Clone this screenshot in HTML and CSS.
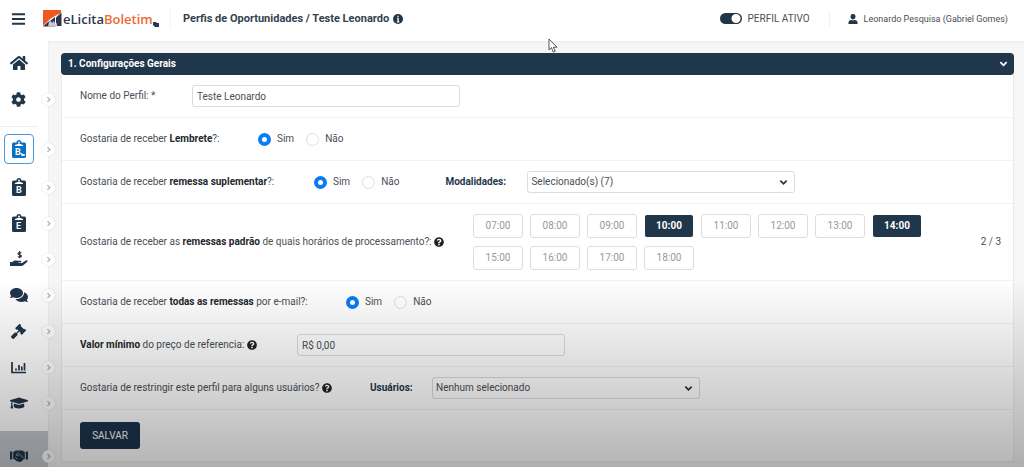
FILE: index.html
```html
<!DOCTYPE html>
<html lang="pt-BR">
<head>
<meta charset="utf-8">
<meta name="viewport" content="width=device-width, initial-scale=1">
<title>eLicita Boletim</title>
<link rel="stylesheet" href="styles.css">
</head>
<body>
<svg class="defs" aria-hidden="true">
  <symbol id="help" viewBox="0 0 512 512"><path d="M504 256c0 136.997-111.043 248-248 248S8 392.997 8 256C8 119.083 119.043 8 256 8s248 111.083 248 248zM262.655 90c-54.497 0-89.255 22.957-116.549 63.758-3.536 5.286-2.353 12.415 2.715 16.258l34.699 26.31c5.205 3.947 12.621 3.008 16.665-2.122 17.864-22.658 30.113-35.797 57.303-35.797 20.429 0 45.698 13.148 45.698 32.958 0 14.976-12.363 22.667-32.534 33.976C247.128 238.528 216 254.941 216 296v4c0 6.627 5.373 12 12 12h56c6.627 0 12-5.373 12-12v-1.333c0-28.462 83.186-29.647 83.186-106.667 0-58.002-60.165-102-116.531-102zM256 338c-25.365 0-46 20.635-46 46 0 25.364 20.635 46 46 46s46-20.636 46-46c0-25.365-20.635-46-46-46z"/></symbol>
  <symbol id="chev" viewBox="0 0 10 10"><path d="M3.5 1.5 7 5 3.5 8.500" fill="none" stroke="currentColor" stroke-width="1.600"/></symbol>
  <symbol id="down" viewBox="0 0 10 10"><path d="M1.500 3 5 6.500 8.500 3" fill="none" stroke="currentColor" stroke-width="2"/></symbol>
  <symbol id="board" viewBox="0 0 14 18"><path d="M1.500 2.500h3a2.500 2.500 0 0 1 5 0h3A1.500 1.500 0 0 1 14 4v12.500a1.500 1.500 0 0 1-1.500 1.500h-11A1.500 1.500 0 0 1 0 16.500V4a1.500 1.500 0 0 1 1.500-1.500z"/><circle cx="7" cy="2.500" r=".9" fill="#fff"/><path d="M3 6V5l4-1.500L11 5v1z" fill="#fff"/></symbol>
</svg>

<header class="topbar">
  <button class="menu" aria-label="Menu"><svg viewBox="0 0 13 12"><path d="M0 1.200h13M0 6h13M0 10.800h13" stroke="currentColor" stroke-width="2"/></svg></button>
  <a class="logo" href="#">
    <svg viewBox="0 0 19 17" aria-hidden="true"><path d="M0 0h18v3L12 6 7 9l-3 3-4 4z" fill="#f0581f"/><path d="M18.500 2.500V16H13V7.500z" fill="#2b3550"/><path d="M0 16.500 5 12l2-1 5-4v9.500z" fill="#2b3550"/><path d="m6 12 2-1 1 2 2-2 1 3 2-1v3.500H5z" fill="#c9ccd6"/></svg>
    <span class="word">eLicita<b>Boletim</b></span>
    <svg class="mark" viewBox="0 0 6 5" aria-hidden="true"><path d="M0 0h3l1 1 2 0v4H2L0 3z"/></svg>
  </a>
  <h1>Perfis de Oportunidades / Teste Leonardo
    <svg viewBox="0 0 10 10" aria-hidden="true"><circle cx="5" cy="5" r="5"/><path d="M5 1.800v1.700M4 4.800h1.200v3M3.800 7.900h2.500" stroke="#fff" stroke-width="1.200" fill="none"/></svg>
  </h1>
  <label class="active"><input type="checkbox" role="switch" checked>PERFIL ATIVO</label>
  <a class="user" href="#"><svg viewBox="0 0 10 10" aria-hidden="true"><path d="M5 0a2.500 2.500 0 0 1 2.500 2.700C7.500 4.300 6.300 5.500 5 5.500S2.500 4.300 2.500 2.700A2.500 2.500 0 0 1 5 0zM.5 10V8.500C.5 6.800 2 6 3.500 6c1 .5 2 .5 3 0C8 6 9.500 6.800 9.500 8.500V10z"/></svg>Leonardo Pesquisa (Gabriel Gomes)</a>
</header>

<div class="shell">
  <nav class="side" aria-label="Principal">
    <a class="item" href="#" aria-label="Início"><svg class="wide" viewBox="0 0 576 512"><path d="M280.370 148.260L96 300.110V464a16 16 0 0 0 16 16l112.060-.29a16 16 0 0 0 15.920-16V368a16 16 0 0 1 16-16h64a16 16 0 0 1 16 16v95.640a16 16 0 0 0 16 16.050L464 480a16 16 0 0 0 16-16V300L295.670 148.260a12.190 12.190 0 0 0-15.300 0zM571.600 251.470L488 182.560V44.050a12 12 0 0 0-12-12h-56a12 12 0 0 0-12 12v72.610L318.470 43a48 48 0 0 0-61 0L4.340 251.470a12 12 0 0 0-1.600 16.900l25.500 31A12 12 0 0 0 45.150 301l235.220-193.740a12.190 12.190 0 0 1 15.300 0L530.900 301a12 12 0 0 0 16.900-1.600l25.500-31a12 12 0 0 0-1.700-16.930z"/></svg></a>
    <a class="item" href="#" aria-label="Configurações"><svg viewBox="0 0 512 512"><path d="M487.400 315.700l-42.600-24.600c4.300-23.200 4.300-47 0-70.200l42.600-24.600c4.900-2.800 7.100-8.600 5.500-14-11.100-35.600-30-67.800-54.700-94.600-3.800-4.100-10-5.100-14.800-2.300L380.800 110c-17.900-15.400-38.500-27.300-60.800-35.100V25.800c0-5.600-3.900-10.500-9.400-11.700-36.700-8.200-74.300-7.800-109.200 0-5.500 1.200-9.400 6.100-9.400 11.700V75c-22.200 7.900-42.800 19.800-60.800 35.100L88.700 85.500c-4.900-2.800-11-1.900-14.800 2.300-24.700 26.700-43.600 58.900-54.700 94.600-1.700 5.400.6 11.200 5.500 14L67.300 221c-4.300 23.200-4.300 47 0 70.200l-42.600 24.600c-4.900 2.800-7.100 8.600-5.500 14 11.100 35.600 30 67.800 54.700 94.600 3.800 4.100 10 5.100 14.800 2.300l42.600-24.600c17.900 15.400 38.500 27.300 60.800 35.100v49.200c0 5.600 3.900 10.500 9.400 11.700 36.700 8.200 74.300 7.800 109.200 0 5.500-1.200 9.400-6.100 9.400-11.700v-49.200c22.200-7.900 42.800-19.800 60.800-35.100l42.600 24.600c4.900 2.800 11 1.900 14.800-2.300 24.700-26.700 43.600-58.900 54.700-94.600 1.500-5.500-.7-11.300-5.600-14.100zM256 336c-44.100 0-80-35.900-80-80s35.900-80 80-80 80 35.900 80 80-35.900 80-80 80z"/></svg><i class="knob"><svg><use href="#chev"/></svg></i></a>
    <hr>
    <a class="item current" href="#" aria-label="Boletins"><svg class="tall" viewBox="0 0 14 18"><use href="#board"/><text x="3" y="15">B</text><path d="M8.500 13h1.200l1 1h2v2h-3z" fill="#fff"/></svg><i class="knob"><svg><use href="#chev"/></svg></i></a>
    <a class="item" href="#" aria-label="Boletim"><svg class="tall" viewBox="0 0 14 18"><use href="#board"/><text x="4" y="15">B</text></svg><i class="knob"><svg><use href="#chev"/></svg></i></a>
    <a class="item" href="#" aria-label="Editais"><svg class="tall" viewBox="0 0 14 18"><use href="#board"/><text x="4" y="15">E</text></svg><i class="knob"><svg><use href="#chev"/></svg></i></a>
    <a class="item" href="#" aria-label="Financeiro"><svg class="wide" viewBox="0 0 18 16"><path d="M0 11h2.500c1.500-1.500 3-1.700 4.500-1.200h3.500c1.200 0 1 1.700 0 1.700H8v.6h4l3.800-2.700c1.300-.7 2.400.5 1.300 1.600l-3.800 3.300q-1 .7-2 .7H0z"/><path d="M11.300 2.200C10.600 1.300 8 1.200 8 2.700c0 1.400 3.400.9 3.400 2.400 0 1.400-2.700 1.400-3.500.4M9.700 0v7.300" fill="none" stroke="currentColor" stroke-width="1.200"/></svg><i class="knob"><svg><use href="#chev"/></svg></i></a>
    <a class="item" href="#" aria-label="Mensagens"><svg class="wide" viewBox="0 0 576 512"><path d="M416 192c0-88.400-93.100-160-208-160S0 103.600 0 192c0 34.300 14.100 65.900 38 92-13.400 30.200-35.500 54.200-35.800 54.500-2.200 2.300-2.800 5.700-1.500 8.700S4.800 352 8 352c36.600 0 66.900-12.300 88.700-25 32.200 15.700 70.300 25 111.300 25 114.900 0 208-71.600 208-160zm122 220c23.900-26 38-57.700 38-92 0-66.900-53.500-124.200-129.300-148.100.9 6.600 1.300 13.300 1.300 20.100 0 105.900-107.700 192-240 192-10.800 0-21.300-.8-31.700-1.900C207.800 439.600 281.800 480 368 480c41 0 79.100-9.200 111.300-25 21.800 12.700 52.100 25 88.700 25 3.200 0 6.100-1.900 7.300-4.800 1.300-2.900.7-6.300-1.500-8.700-.3-.3-22.400-24.200-35.800-54.500z"/></svg><i class="knob"><svg><use href="#chev"/></svg></i></a>
    <a class="item" href="#" aria-label="Leilões"><svg viewBox="0 0 512 512"><path d="M504.971 199.362l-22.627-22.627c-9.373-9.373-24.569-9.373-33.941 0l-5.657 5.657L329.608 69.255l5.657-5.657c9.373-9.373 9.373-24.569 0-33.941L312.638 7.029c-9.373-9.373-24.569-9.373-33.941 0L154.246 131.480c-9.373 9.373-9.373 24.569 0 33.941l22.627 22.627c9.373 9.373 24.569 9.373 33.941 0l5.657-5.657 39.598 39.598-81.040 81.040-5.657-5.657c-12.497-12.497-32.758-12.497-45.255 0L9.373 412.118c-12.497 12.497-12.497 32.758 0 45.255l45.255 45.255c12.497 12.497 32.758 12.497 45.255 0l114.745-114.745c12.497-12.497 12.497-32.758 0-45.255l-5.657-5.657 81.040-81.040 39.598 39.598-5.657 5.657c-9.373 9.373-9.373 24.569 0 33.941l22.627 22.627c9.373 9.373 24.569 9.373 33.941 0l124.451-124.451c9.372-9.372 9.372-24.568 0-33.941z"/></svg><i class="knob"><svg><use href="#chev"/></svg></i></a>
    <a class="item" href="#" aria-label="Relatórios"><svg viewBox="0 0 15 15"><path d="M1 2v10.500h14M5 10.500v-2M8 10.500V5M10.800 10.500V6.500M13.500 10.500V3" fill="none" stroke="currentColor" stroke-width="1.700"/></svg><i class="knob"><svg><use href="#chev"/></svg></i></a>
    <a class="item" href="#" aria-label="Cursos"><svg class="wide" viewBox="0 0 640 512"><path d="M622.340 153.200L343.400 67.500c-15.200-4.670-31.600-4.670-46.790 0L17.660 153.200c-23.540 7.230-23.540 38.360 0 45.590l48.630 14.940c-10.670 13.190-17.230 29.280-17.880 46.900C38.780 266.150 32 276.110 32 288c0 10.780 5.680 19.850 13.860 25.650L20.330 428.530C18.110 438.520 25.710 448 35.940 448h56.110c10.240 0 17.840-9.480 15.620-19.470L82.140 313.650C90.320 307.850 96 298.780 96 288c0-11.570-6.470-21.250-15.660-26.870.76-15.020 8.440-28.300 20.690-36.720L296.600 284.500c9.060 2.780 26.440 6.250 46.790 0l278.950-85.700c23.550-7.240 23.550-38.360 0-45.600zM352.790 315.090c-28.530 8.760-52.840 3.920-65.590 0l-145.020-44.550L128 384c0 35.350 85.960 64 192 64s192-28.650 192-64l-14.180-113.470-145.030 44.560z"/></svg><i class="knob"><svg><use href="#chev"/></svg></i></a>
    <a class="item last" href="#" aria-label="Parceiros"><svg class="wide" viewBox="0 0 20 14"><path d="M0 2h2.500v9H0zM17.500 2H20v9h-2.500zM3.500 2.500 6.500 1h7l3 1.500V10l-1.500.5-2 2.500-2 .7L7 12.500 5 10.500l-1.500-.5z"/><path d="m9.500 2.800-2.800 3c.8 1.200 2 .9 3-.3l1-.5 4 4.300M6 8.500l2 1.800" fill="none" stroke="#a9adb2"/></svg><i class="knob"><svg><use href="#chev"/></svg></i></a>
  </nav>

  <main class="main">
    <form class="panel">
      <h2>1. Configurações Gerais <svg aria-hidden="true"><use href="#down"/></svg></h2>

      <div class="row">
        <label class="name" for="nome">Nome do Perfil: *</label>
        <input class="field" id="nome" type="text" value="Teste Leonardo">
      </div>

      <div class="row" role="radiogroup" aria-labelledby="q1">
        <span class="q-reminder" id="q1">Gostaria de receber <b>Lembrete</b>?:</span>
        <span class="radios"><label><input type="radio" name="lembrete" checked>Sim</label><label><input type="radio" name="lembrete">Não</label></span>
      </div>

      <div class="row">
        <span class="q-extra" id="q2">Gostaria de receber <b>remessa suplementar</b>?:</span>
        <span class="radios" role="radiogroup" aria-labelledby="q2"><label><input type="radio" name="suplementar" checked>Sim</label><label><input type="radio" name="suplementar">Não</label></span>
        <span class="pair modes"><label for="mod">Modalidades:</label>
        <span class="select"><select class="field" id="mod"><option>Selecionado(s) (7)</option></select><svg aria-hidden="true"><use href="#down"/></svg></span></span>
      </div>

      <div class="row times">
        <span class="q-times" id="q3">Gostaria de receber as <b>remessas padrão</b> de quais horários de processamento?: <svg class="help"><use href="#help"/></svg></span>
        <div class="slots" role="group" aria-labelledby="q3">
          <button type="button">07:00</button><button type="button">08:00</button><button type="button">09:00</button><button type="button" class="on" aria-pressed="true">10:00</button><button type="button">11:00</button><button type="button">12:00</button><button type="button">13:00</button><button type="button" class="on" aria-pressed="true">14:00</button><button type="button">15:00</button><button type="button">16:00</button><button type="button">17:00</button><button type="button">18:00</button>
        </div>
        <span class="count">2 / 3</span>
      </div>

      <div class="row" role="radiogroup" aria-labelledby="q4">
        <span class="q-mail" id="q4">Gostaria de receber <b>todas as remessas</b> por e-mail?:</span>
        <span class="radios"><label><input type="radio" name="email" checked>Sim</label><label><input type="radio" name="email">Não</label></span>
      </div>

      <div class="row">
        <label class="q-value" for="valor"><b>Valor mínimo</b> do preço de referencia: <svg class="help"><use href="#help"/></svg></label>
        <input class="field" id="valor" type="text" value="R$ 0,00">
      </div>

      <div class="row">
        <span class="q-users">Gostaria de restringir este perfil para alguns usuários? <svg class="help"><use href="#help"/></svg></span>
        <span class="pair"><label for="usr">Usuários:</label>
        <span class="select"><select class="field" id="usr"><option>Nenhum selecionado</option></select><svg aria-hidden="true"><use href="#down"/></svg></span></span>
      </div>

      <div class="row actions"><button class="save" type="button">SALVAR</button></div>
    </form>
  </main>
</div>

<div class="shade"></div>
<svg class="cursor" viewBox="0 0 10 15" aria-hidden="true"><path d="M1 1v11l2.500-2.300L5.200 14l2-.8-1.800-4H9z" fill="#fff" stroke="#555"/></svg>
</body>
</html>
```

FILE: styles.css
```css
* { box-sizing: border-box; }

body {
  margin: 0;
  min-height: 100vh;
  display: flex;
  flex-direction: column;
  background: #f6f6f7;
  color: #4a4f55;
  font: 10px/16px Roboto, sans-serif;
  overflow: hidden;
}

button, input, select { font: inherit; color: inherit; margin: 0; }
a { color: inherit; text-decoration: none; }
svg { fill: currentColor; flex: none; }
.defs { position: absolute; width: 0; height: 0; }

/* Top bar */
.topbar {
  display: flex;
  align-items: center;
  height: 41px;
  padding: 0 16px 4px 12px;
  background: #fff;
  box-shadow: 0 1px 4px #0000000d;
}
.menu { width: 13px; padding: 0; border: 0; background: none; color: #22364a; line-height: 0; }
.menu svg { width: 13px; height: 12px; }
.logo { display: flex; align-items: center; width: 128px; margin-left: 18px; color: #2b3550; border-right: 1px solid #f4f4f4; }
.logo > svg { width: 19px; height: 17px; }
.word { margin-left: 1px; font: 600 13px/20px "Open Sans", sans-serif; }
.word b { color: #ee6a35; font-weight: 600; }
.logo .mark { width: 6px; height: 5px; margin-top: 12px; }
h1 { display: flex; align-items: center; gap: 4px; margin: 0 auto 0 12px; font-size: 11px; color: #33414f; }
h1 svg { width: 10px; height: 10px; color: #22364a; }
.active { display: flex; align-items: center; gap: 6px; padding-right: 19px; border-right: 1px solid #f0f0f0; }
.active input {
  appearance: none;
  width: 22px;
  height: 11px;
  border-radius: 6px;
  background: radial-gradient(circle at 16px 50%, #fff 4px, transparent 5px) #22364a;
}
.user { display: flex; align-items: center; gap: 6px; margin-left: 18px; font-size: 9px; }
.user svg { width: 10px; height: 10px; color: #22364a; }

/* Sidebar */
.shell { display: flex; flex: 1; }
.side { display: flex; flex-direction: column; width: 49px; padding-top: 4px; background: #fff; color: #22364a; border-right: 1px solid #f0f0f0; }
.item { position: relative; display: flex; align-items: center; justify-content: center; height: 36px; padding-right: 11px; }
.item > svg { width: 15px; height: 15px; }
.item > .wide { width: 18px; height: 16px; }
.item > .tall { width: 14px; height: 18px; }
.item text { fill: #fff; font: 700 9px Roboto, sans-serif; }
.side hr { width: 38px; height: 1px; margin: 9px 0 2px; border: 0; background: #eee; }
.current { height: 40px; color: #0b6fc2; }
.current::before { content: ""; position: absolute; inset: 5px 14px 5px 4px; border: 1px solid #4a98dc; border-radius: 4px; }
.knob { position: absolute; right: -7px; display: flex; align-items: center; justify-content: center; width: 13px; height: 13px; border-radius: 50%; background: #fff; box-shadow: 0 0 2px #0002; color: #aaa; }
.knob svg { width: 7px; height: 7px; }
.last { flex: 1; min-height: 50px; margin-top: 10px; background: #c5c9cf; }

/* Form panel */
.main { flex: 1; padding: 12px 10px 6px 12px; }
.panel { background: #fff; border: 1px solid #eaeaea; border-top: 0; border-radius: 4px 4px 0 0; }
h2 { display: flex; align-items: center; justify-content: space-between; height: 22px; margin: 0 -1px; padding: 0 6px 0 7px; border-radius: 4px; background: #20364b; color: #fff; font-size: 10px; }
h2 svg { width: 9px; height: 10px; }
.row { display: flex; align-items: center; gap: 34px; min-height: 43px; padding: 0 12px 0 18px; border-bottom: 1px solid #f2f2f2; }
.row b { color: #24282d; }
.name { min-width: 78px; }
.q-reminder { min-width: 144px; }
.q-extra { min-width: 200px; }
.q-times { min-width: 367px; }
.q-mail { min-width: 232px; }
.q-value { min-width: 183px; }
.q-users { min-width: 256px; }
.field { width: 268px; height: 22px; padding: 0 4px; border: 1px solid #dcdcdc; border-radius: 3px; background: #fff; }
select.field { padding: 0 3px; }
.select { position: relative; display: flex; }
.select select { appearance: none; }
.select svg { position: absolute; right: 7px; top: 7px; width: 9px; height: 9px; pointer-events: none; color: #333; }
.radios { display: flex; gap: 12px; min-width: 84px; }
.radios label { display: flex; align-items: center; gap: 6px; }
.radios input { appearance: none; width: 13px; height: 13px; border: 1px solid #dedede; border-radius: 50%; background: #fff; }
.radios input:checked { border: 4px solid #0a7cf5; }
.pair { display: flex; align-items: center; gap: 18px; color: #24384b; }
.pair label { min-width: 44px; font-weight: 700; }
.pair select { color: #4a4f55; }
.modes { margin-left: 12px; }
.modes label { min-width: 64px; }
.help { width: 10px; height: 10px; vertical-align: -2px; color: #222; }
.times { gap: 26px; min-height: 77px; }
.slots { display: flex; flex-wrap: wrap; gap: 8px 7px; width: 450px; }
.slots button { width: 50px; height: 24px; padding: 0; border: 1px solid #ddd; border-radius: 3px; background: #fff; color: #999; }
.slots .on { border-color: #fff; background: #20364b; color: #fff; font-weight: 700; }
.count { margin-left: auto; }
.actions { min-height: 51px; border: 0; }
.save { width: 60px; height: 27px; padding: 0; border: 0; border-radius: 3px; background: #1d344d; color: #fff; }

/* Bottom fade and pointer */
.shade { position: fixed; inset: 60% 0 0; pointer-events: none; background: linear-gradient(#0000, #0000004a); }
.cursor { position: absolute; left: 548px; top: 38px; width: 10px; height: 15px; }
```
